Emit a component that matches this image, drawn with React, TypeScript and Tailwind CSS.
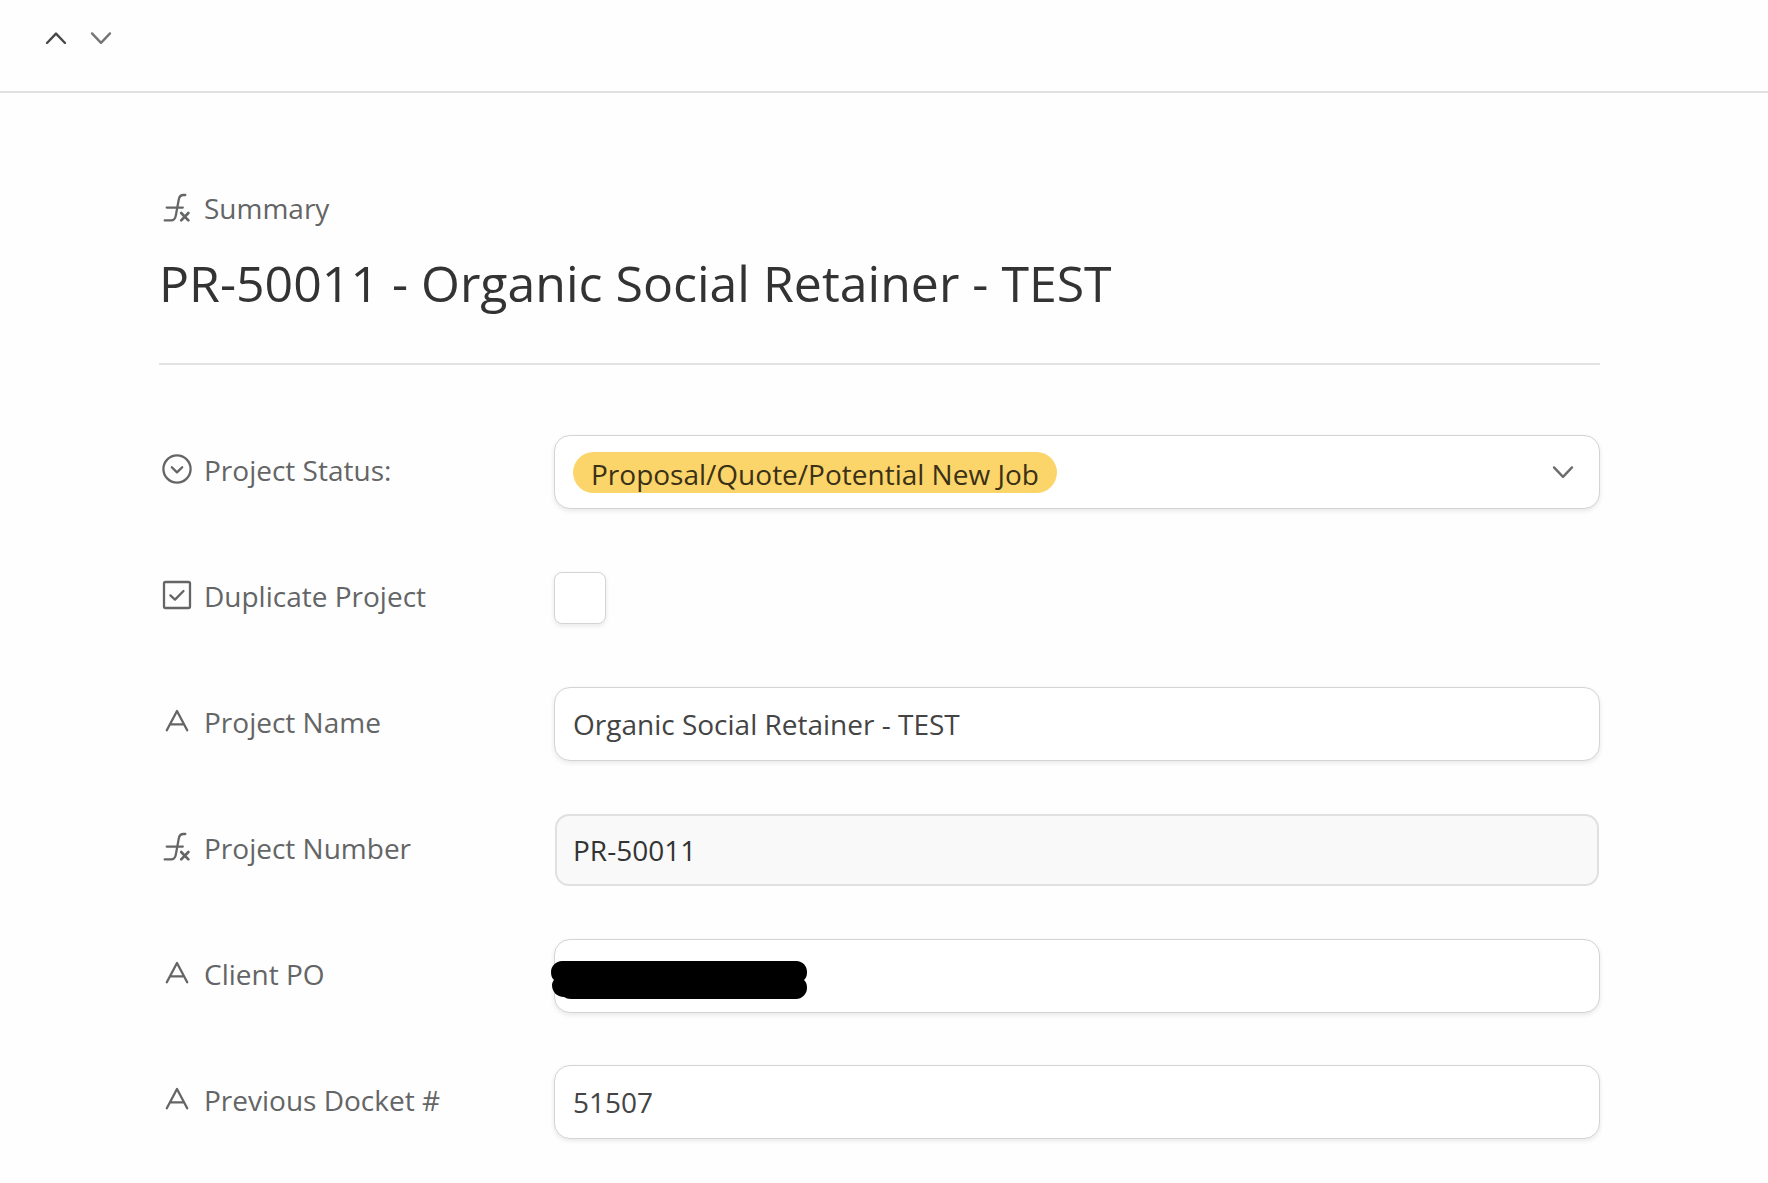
import { useState, type ReactNode } from "react";

type IconName = "formula" | "select" | "checkbox" | "text";

function FieldIcon({ name }: { name: IconName }) {
  return (
    <svg
      viewBox="0 0 36 36"
      className="h-9 w-9 shrink-0"
      fill="none"
      stroke="currentColor"
      strokeWidth="2.3"
      strokeLinecap="round"
      strokeLinejoin="round"
      aria-hidden="true"
    >
      {name === "formula" && (
        <>
          <path d="M26.3 5H24.5C21.5 5 20.3 6.6 19.8 9.4L16.8 25.6C16.2 29 14.8 30.4 12 30.4H5.7" />
          <path d="M7.7 17.6H23.8" />
          <path d="M22.2 23L29.4 30.4M29.4 23L22.2 30.4" strokeWidth="2.7" />
        </>
      )}
      {name === "select" && (
        <>
          <circle cx="18" cy="18" r="13.6" />
          <path d="M12.8 16.2L18 21.4L23.2 16.2" />
        </>
      )}
      {name === "checkbox" && (
        <>
          <rect x="5" y="5" width="26" height="26" rx="1.5" />
          <path d="M11.4 18.4L16 22.6L24.5 14" />
        </>
      )}
      {name === "text" && <path d="M7.8 27.2L18 8L28.2 27.2M11.4 21.4H24.6" />}
    </svg>
  );
}

function Chevron({ up = false }: { up?: boolean }) {
  return (
    <svg
      viewBox="0 0 24 24"
      className="h-6 w-6"
      fill="none"
      stroke="currentColor"
      strokeWidth="2.4"
      strokeLinecap="round"
      strokeLinejoin="round"
      aria-hidden="true"
    >
      <path d={up ? "M3 17L12 7.6L21 17" : "M3 7.4L12 16.8L21 7.4"} />
    </svg>
  );
}

function Row({
  id,
  icon,
  label,
  children,
}: {
  id: string;
  icon: IconName;
  label: string;
  children: ReactNode;
}) {
  return (
    <div className="flex min-h-[74px] items-center">
      <label
        htmlFor={id}
        className="flex w-[395px] shrink-0 items-center gap-[9px] pb-1.5 text-[28px] leading-9 text-[#646566]"
      >
        <FieldIcon name={icon} />
        <span className="pt-0.5">{label}</span>
      </label>
      {children}
    </div>
  );
}

const box =
  "h-[74px] w-full min-w-0 rounded-2xl border border-[#d4d4d4] bg-white shadow-[0_2px_5px_rgba(0,0,0,0.09)]";
const input = `${box} px-[18px] text-[28px] text-[#444] outline-none`;

export default function App() {
  const [status, setStatus] = useState("Proposal/Quote/Potential New Job");
  const [duplicate, setDuplicate] = useState(false);

  return (
    <div className="min-h-screen bg-[#fefefe] font-['Open_Sans','Noto_Sans',sans-serif]">
      <header className="flex h-[93px] items-start gap-[21px] border-b-2 border-[#e1e1e1] px-11 pt-[26px]">
        <button type="button" aria-label="Previous record" className="text-[#484848]">
          <Chevron up />
        </button>
        <button type="button" aria-label="Next record" className="text-[#757575]">
          <Chevron />
        </button>
      </header>

      <main className="pt-[97px] pr-[168px] pb-10 pl-[159px]">
        <div className="flex items-center gap-[9px] text-[28px] leading-9 text-[#646566]">
          <FieldIcon name="formula" />
          Summary
        </div>
        <h1 className="mt-[22px] border-b-2 border-[#e2e2e2] pb-[45px] text-[50px] leading-[70px] text-[#333]">
          PR-50011 - Organic Social Retainer - TEST
        </h1>

        <form className="mt-[70px] flex flex-col gap-[52px]">
          <Row id="status" icon="select" label="Project Status:">
            <div className={`${box} flex items-center justify-between pr-6 pl-[18px]`}>
              <select
                id="status"
                value={status}
                onChange={(e) => setStatus(e.target.value)}
                className="h-[41px] appearance-none overflow-hidden rounded-full bg-[#fcd56a] px-[18px] pt-1 text-[28px] leading-9 text-[#3a3117] outline-none"
              >
                <option>Proposal/Quote/Potential New Job</option>
              </select>
              <span className="text-[#6c6c6c]">
                <Chevron />
              </span>
            </div>
          </Row>

          <Row id="duplicate" icon="checkbox" label="Duplicate Project">
            <input
              id="duplicate"
              type="checkbox"
              checked={duplicate}
              onChange={(e) => setDuplicate(e.target.checked)}
              className="h-[52px] w-[52px] appearance-none rounded-lg border border-[#d4d4d4] bg-white shadow-[0_2px_5px_rgba(0,0,0,0.09)] checked:bg-[#646566]"
            />
          </Row>

          <Row id="name" icon="text" label="Project Name">
            <input id="name" type="text" defaultValue="Organic Social Retainer - TEST" className={input} />
          </Row>

          <Row id="number" icon="formula" label="Project Number">
            <input
              id="number"
              type="text"
              readOnly
              value="PR-50011"
              className="mx-px h-[72px] w-full min-w-0 rounded-[14px] border-2 border-[#e0e0e0] bg-[#f9f9f9] px-4 text-[28px] text-[#333] outline-none"
            />
          </Row>

          <Row id="po" icon="text" label="Client PO">
            <div className="relative w-full min-w-0">
              <input id="po" type="text" className={input} />
              {/* marker strokes over the PO value */}
              <svg
                viewBox="0 0 256 38"
                className="pointer-events-none absolute top-[22px] -left-[3px] h-[38px] w-64"
                aria-hidden="true"
              >
                <path d="M11 0H245C252 0 256 5 256 11C256 15 255 17 253 19C255 21 256 23 256 27C256 33 251 38 245 38H20C17 38 15 37 13 36C6 36 1 31 1 24C1 22 2 20 3 19C1 17 0 15 0 11C0 5 5 0 11 0Z" />
              </svg>
            </div>
          </Row>

          <Row id="docket" icon="text" label="Previous Docket #">
            <input id="docket" type="text" defaultValue="51507" className={input} />
          </Row>
        </form>
      </main>
    </div>
  );
}
